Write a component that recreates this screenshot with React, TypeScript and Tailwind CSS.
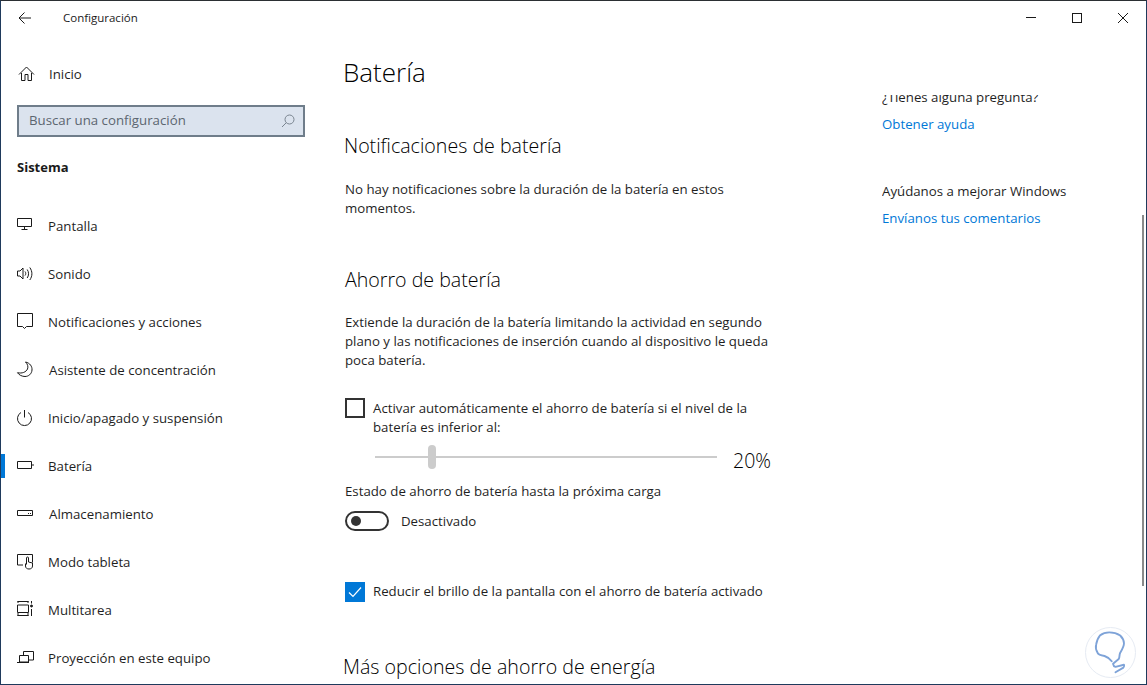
import type { ReactNode } from 'react';

function Icon({ children }: { children: ReactNode }) {
  return (
    <svg viewBox="0 0 24 24" fill="none" stroke="currentColor" strokeWidth="1" className="h-6 w-6 text-[#1a1a1a]">
      {children}
    </svg>
  );
}

const navItems: { label: string; active?: boolean; icon: ReactNode; gap: string }[] = [
  {
    label: 'Pantalla',
    gap: 'ml-[12px]',
    icon: (
      <Icon>
        <path d="M5.500 4.500h14v8h-14zM12.500 12.500v3M9.500 15.500h6" />
      </Icon>
    ),
  },
  {
    label: 'Sonido',
    gap: 'ml-[12px]',
    icon: (
      <Icon>
        <path d="M5.500 9h2.500l3-3v11l-3-3H5.500zM13 9.500c1 1.300 1 2.800 0 4M15.200 7.500c1.800 2.500 1.800 6 0 8.500M17.800 5.500c2.800 4 2.800 8.500 0 12.500" />
      </Icon>
    ),
  },
  {
    label: 'Notificaciones y acciones',
    gap: 'ml-[12px]',
    icon: (
      <Icon>
        <path d="M5.500 3.500h15v13h-6l-2 2-2-2h-5z" />
      </Icon>
    ),
  },
  {
    label: 'Asistente de concentración',
    gap: 'ml-[13px]',
    icon: (
      <Icon>
        <path d="M13.500 4c4.500 1 6.800 4.500 6.500 8-.3 4-3.500 6.500-7 6.500-3 0-6-1.500-7.500-3.800 4.500 1 8.500-.5 10-3.700 1-2.500 0-5-2-7z" />
      </Icon>
    ),
  },
  {
    label: 'Inicio/apagado y suspensión',
    gap: 'ml-[12px]',
    icon: (
      <Icon>
        <path d="M12.500 4v7.500M9 6.500a7 7 0 1 0 7 0" />
      </Icon>
    ),
  },
  {
    label: 'Batería',
    active: true,
    gap: 'ml-[12px]',
    icon: (
      <Icon>
        <path d="M5.500 7.500h14v7h-14zM21 10v2" />
      </Icon>
    ),
  },
  {
    label: 'Almacenamiento',
    gap: 'ml-[13px]',
    icon: (
      <Icon>
        <path d="M5.500 8.500h15v5h-15zM16 11.500h1M18 11.500h1" />
      </Icon>
    ),
  },
  {
    label: 'Modo tableta',
    gap: 'ml-[12px]',
    icon: (
      <Icon>
        <path d="M11 15H5.500V4.500h15v8M13.500 13.500v2.500c0 2 1.500 3 3.500 3s3.500-1 3.500-3v-3l-4-1V8a1 1 0 0 0-2 0v6.500" />
      </Icon>
    ),
  },
  {
    label: 'Multitarea',
    gap: 'ml-[12px]',
    icon: (
      <Icon>
        <path d="M5.500 3.500h11M5.500 17.500h11M5.500 7h11v7.500h-11zM6 3v2M16 3v2M6 15v3M16 15v3M19.500 3v2.500M19.500 11v7" />
        <circle cx="19.500" cy="8" r="1" fill="currentColor" />
      </Icon>
    ),
  },
  {
    label: 'Proyección en este equipo',
    gap: 'ml-[12px]',
    icon: (
      <Icon>
        <path d="M11.500 9V5.500h10v8.500h-5M7.500 9.500h9v6.500h-9zM5 16.500h12" />
      </Icon>
    ),
  },
];

function Body({ className = '', children }: { className?: string; children: ReactNode }) {
  return <p className={`text-[13.25px] leading-[19px] text-[#1f1f1f] ${className}`}>{children}</p>;
}

function Heading({ className = '', children }: { className?: string; children: ReactNode }) {
  return <h2 className={`text-[19.6px] leading-[27px] font-light text-black ${className}`}>{children}</h2>;
}

export default function App() {
  return (
    <div className="flex h-[685px] w-[1147px] flex-col overflow-hidden border border-[#1f3a5c] border-t-[#2b2f33] bg-white font-['Open_Sans','Noto_Sans',sans-serif] antialiased">
      <header className="flex h-[33px] shrink-0 items-center">
        <svg viewBox="0 0 16 16" fill="none" stroke="#1a1a1a" strokeWidth="1" className="ml-[16px] h-4 w-4">
          <path d="M14 8H2M7.500 2.500 2 8l5.500 5.500" />
        </svg>
        <span className="ml-[30px] text-[11.5px] text-[#1a1a1a]">Configuración</span>
        <div className="ml-auto flex items-center">
          <span className="mr-[36px] h-px w-[10px] bg-[#1a1a1a]" />
          <span className="mr-[36px] h-[10px] w-[10px] border border-[#1a1a1a]" />
          <svg viewBox="0 0 10 10" stroke="#1a1a1a" strokeWidth="1" className="mr-[18px] h-[10px] w-[10px]">
            <path d="M0 0l10 10M10 0 0 10" />
          </svg>
        </div>
      </header>

      <div className="flex min-h-0 flex-1">
        <aside className="w-[342px] shrink-0">
          <div className="mt-[28px] ml-[13px] flex h-6 items-center">
            <svg viewBox="0 0 24 24" fill="none" stroke="#1a1a1a" strokeWidth="1" className="h-6 w-6">
              <path d="M5 12.500 12.500 5 20 12.500M7.500 11v7.500h3.500v-6h3v6h3.500V11" />
            </svg>
            <span className="ml-[11px] pt-[2px] text-[13.25px] text-[#1f1f1f]">Inicio</span>
          </div>
          <div className="mt-[19px] ml-[16px] flex h-[32px] w-[288px] items-center justify-between border-2 border-[#6f7d8a] bg-[#dbe3ee] pr-[7px] pl-[10px]">
            <span className="text-[13.25px] text-[#5c6670]">Buscar una configuración</span>
            <svg viewBox="0 0 16 16" fill="none" stroke="#7a8590" strokeWidth="1" className="h-4 w-4">
              <circle cx="9.500" cy="6.500" r="4.500" />
              <path d="M6.300 9.700 2 14" />
            </svg>
          </div>
          <p className="mt-[20px] ml-[16px] text-[13px] leading-[20px] font-bold text-[#1a1a1a]">Sistema</p>
          <nav className="mt-[25px] flex flex-col">
            {navItems.map((item) => (
              <div key={item.label} className="flex h-[48px] items-center">
                <span className={`h-6 w-[4px] ${item.active ? 'bg-[#0078d7]' : 'bg-transparent'}`} />
                <span className="ml-[7px]">{item.icon}</span>
                <span className={`${item.gap} pt-[2px] text-[13.25px] text-[#1f1f1f]`}>{item.label}</span>
              </div>
            ))}
          </nav>
        </aside>

        <main className="w-[540px] shrink-0">
          <h1 className="mt-[18px] text-[26px] leading-[40px] font-light text-black">Batería</h1>
          <Heading className="mt-[40px] ml-[1px]">Notificaciones de batería</Heading>
          <Body className="mt-[21px] ml-[2px] w-[420px]">
            No hay notificaciones sobre la duración de la batería en estos momentos.
          </Body>
          <Heading className="mt-[48px] ml-[2px]">Ahorro de batería</Heading>
          <Body className="mt-[20px] ml-[2px] w-[430px]">
            Extiende la duración de la batería limitando la actividad en segundo plano y las notificaciones de inserción cuando al dispositivo le queda poca batería.
          </Body>
          <div className="mt-[28px] ml-[2px] flex items-start">
            <span className="h-5 w-5 shrink-0 border-2 border-[#333]" />
            <Body className="ml-[8px] w-[400px] pt-[1px]">
              Activar automáticamente el ahorro de batería si el nivel de la batería es inferior al:
            </Body>
          </div>
          <div className="mt-[4px] ml-[32px] flex h-[32px] items-center">
            <div className="relative h-[2px] w-[342px] bg-[#cccccc]">
              <span className="absolute top-[-11px] left-[53px] h-6 w-2 rounded-full bg-[#cccccc]" />
            </div>
            <span className="mt-[8px] ml-[16px] text-[19.5px] font-light text-black">20%</span>
          </div>
          <Body className="mt-[9px] ml-[2px]">Estado de ahorro de batería hasta la próxima carga</Body>
          <div className="mt-[9px] ml-[2px] flex items-center">
            <span className="flex h-5 w-11 items-center rounded-full border-2 border-[#333] pl-[4px]">
              <span className="h-[10px] w-[10px] rounded-full bg-[#333]" />
            </span>
            <span className="ml-[12px] pt-[2px] text-[13.25px] text-[#1f1f1f]">Desactivado</span>
          </div>
          <div className="mt-[50px] ml-[2px] flex items-center">
            <span className="flex h-5 w-5 shrink-0 items-center justify-center bg-[#0078d7]">
              <svg viewBox="0 0 20 20" fill="none" stroke="white" strokeWidth="1.200" className="h-5 w-5">
                <path d="M4 10.500 8 14.500 16 5.500" />
              </svg>
            </span>
            <Body className="ml-[8px]">Reducir el brillo de la pantalla con el ahorro de batería activado</Body>
          </div>
          <Heading className="mt-[51px]">Más opciones de ahorro de energía</Heading>
        </main>

        <aside className="relative ml-[-1px] flex-1 overflow-hidden">
          <div className="pt-[61px]">
            <div className="h-[12px] overflow-hidden">
              <p className="-mt-[7px] text-[13.25px] leading-[19px] text-[#1f1f1f]">¿Tienes alguna pregunta?</p>
            </div>
            <p className="mt-[8px] text-[13.25px] leading-[19px] text-[#0078d7]">Obtener ayuda</p>
            <p className="mt-[48px] text-[13.25px] leading-[19px] text-[#1f1f1f]">Ayúdanos a mejorar Windows</p>
            <p className="mt-[8px] text-[13.25px] leading-[19px] text-[#0078d7]">Envíanos tus comentarios</p>
          </div>
          <span className="absolute top-[181px] right-[2px] h-[371px] w-[2px] bg-[#8a8a8a]" />
          <div className="absolute right-[10px] bottom-[6px] h-[51px] w-[51px] rounded-full border border-[#e6ebf3]">
            <svg viewBox="0 0 52 52" fill="none" stroke="#7ea3d8" strokeWidth="2" strokeLinecap="round" strokeLinejoin="round" className="h-full w-full">
              <path d="M27.300 35.300C25 32 22 30.500 19.700 29.700 16 29 13 28 12.300 26.300 10.500 23 10 20.500 10.700 18 11.500 13 13 10 14.700 8 18 5.500 21 4.700 24.700 4.700 29 4.700 33 5.800 36.300 8 38.800 10.500 40.300 13 40.300 16.300 40.300 20 38 23.500 36.300 26.300 35 29 36 31 34.700 33L28.700 38C29 40 30 41 31.300 41.300L40.300 39C41 40.500 40.500 41.200 39.700 42L31.300 47" />
            </svg>
          </div>
        </aside>
      </div>
    </div>
  );
}
